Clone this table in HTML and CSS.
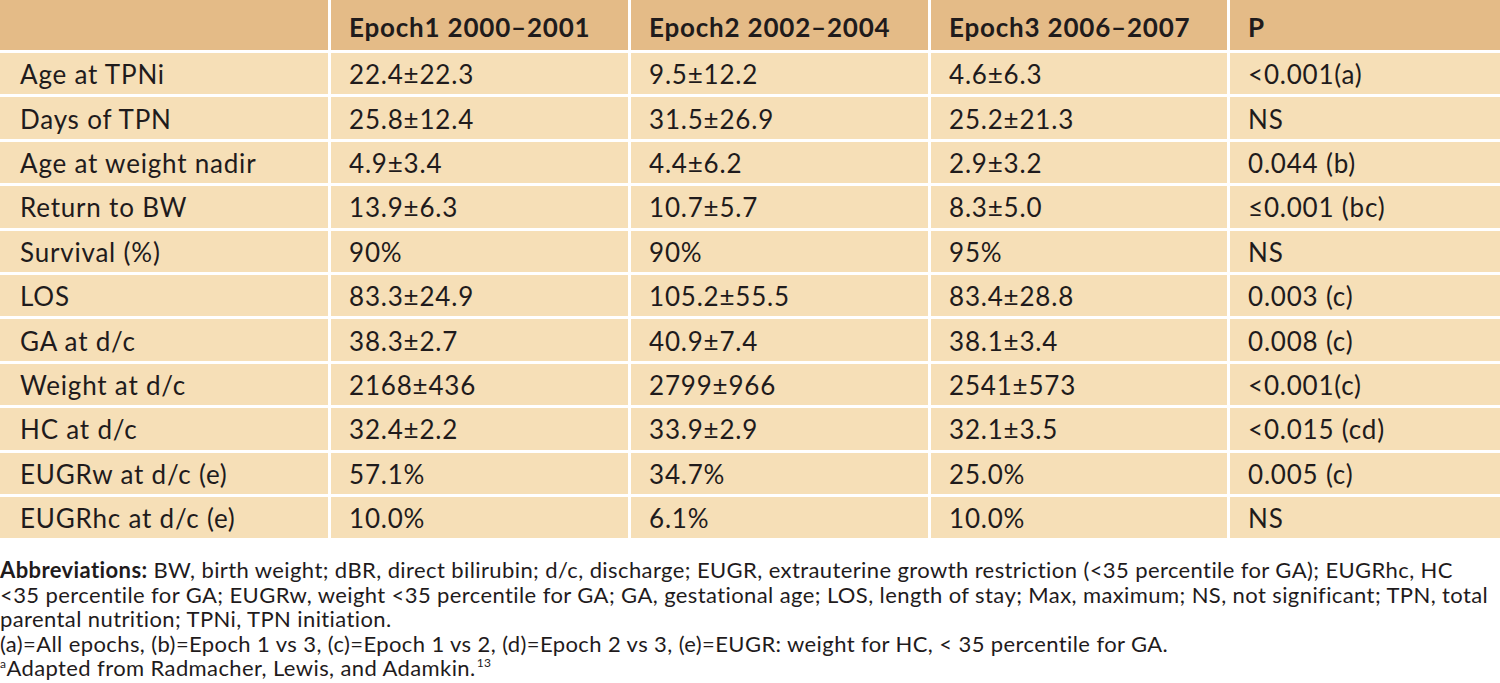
FILE: index.html
```html
<!DOCTYPE html>
<html>
<head>
<meta charset="utf-8">
<link rel="stylesheet" href="styles.css">
</head>
<body>
<div class="page">
<table class="data">
  <colgroup>
    <col class="c1"><col class="c2"><col class="c3"><col class="c4"><col class="c5">
  </colgroup>
  <thead>
    <tr><th></th><th>Epoch1 2000–2001</th><th>Epoch2 2002–2004</th><th>Epoch3 2006–2007</th><th>P</th></tr>
  </thead>
  <tbody>
    <tr><td>Age at TPNi</td><td>22.4±22.3</td><td>9.5±12.2</td><td>4.6±6.3</td><td>&lt;0.001(a)</td></tr>
    <tr><td>Days of TPN</td><td>25.8±12.4</td><td>31.5±26.9</td><td>25.2±21.3</td><td>NS</td></tr>
    <tr><td>Age at weight nadir</td><td>4.9±3.4</td><td>4.4±6.2</td><td>2.9±3.2</td><td>0.044 (b)</td></tr>
    <tr><td>Return to BW</td><td>13.9±6.3</td><td>10.7±5.7</td><td>8.3±5.0</td><td>≤0.001 (bc)</td></tr>
    <tr><td>Survival (%)</td><td>90%</td><td>90%</td><td>95%</td><td>NS</td></tr>
    <tr><td>LOS</td><td>83.3±24.9</td><td>105.2±55.5</td><td>83.4±28.8</td><td>0.003 (c)</td></tr>
    <tr><td>GA at d/c</td><td>38.3±2.7</td><td>40.9±7.4</td><td>38.1±3.4</td><td>0.008 (c)</td></tr>
    <tr><td>Weight at d/c</td><td>2168±436</td><td>2799±966</td><td>2541±573</td><td>&lt;0.001(c)</td></tr>
    <tr><td>HC at d/c</td><td>32.4±2.2</td><td>33.9±2.9</td><td>32.1±3.5</td><td>&lt;0.015 (cd)</td></tr>
    <tr><td>EUGRw at d/c (e)</td><td>57.1%</td><td>34.7%</td><td>25.0%</td><td>0.005 (c)</td></tr>
    <tr><td>EUGRhc at d/c (e)</td><td>10.0%</td><td>6.1%</td><td>10.0%</td><td>NS</td></tr>
  </tbody>
</table>
<div class="notes">
  <p class="line"><b>Abbreviations:</b> BW, birth weight; dBR, direct bilirubin; d/c, discharge; EUGR, extrauterine growth restriction (&lt;35 percentile for GA); EUGRhc, HC</p>
  <p class="line">&lt;35 percentile for GA; EUGRw, weight &lt;35 percentile for GA; GA, gestational age; LOS, length of stay; Max, maximum; NS, not significant; TPN, total</p>
  <p class="line">parental nutrition; TPNi, TPN initiation.</p>
  <p class="line">(a)=All epochs, (b)=Epoch 1 vs 3, (c)=Epoch 1 vs 2, (d)=Epoch 2 vs 3, (e)=EUGR: weight for HC, &lt; 35 percentile for GA.</p>
  <p class="line"><sup class="sa">a</sup>Adapted from Radmacher, Lewis, and Adamkin.<sup class="sn">13</sup></p>
</div>
</div>
</body>
</html>
```

FILE: styles.css
```css
html, body {
  margin: 0;
  padding: 0;
  background: #ffffff;
}
body {
  font-family: Lato, "Noto Sans", sans-serif;
  color: #1f1b1c;
  width: 1500px;
  height: 683px;
  overflow: hidden;
}
.page {
  display: flex;
  flex-direction: column;
}
.data {
  border-collapse: separate;
  border-spacing: 3px;
  margin: -3px -3px 0 -3px;
  width: 1506px;
  table-layout: fixed;
  font-size: 26px;
  letter-spacing: 0.8px;
}
.c1 { width: 328px; }
.c2 { width: 297px; }
.c3 { width: 297px; }
.c4 { width: 296px; }
.c5 { width: 270px; }
.data th {
  background: #e4bb87;
  height: 50px;
  padding: 3px 0 0 18px;
  text-align: left;
  font-weight: 700;
  box-sizing: border-box;
}
.data td {
  background: #f6dfb7;
  height: 41.4px;
  padding: 1px 0 0 18px;
  box-sizing: border-box;
  white-space: nowrap;
}
.data td:first-child {
  padding-left: 20px;
}
.notes {
  margin-top: 17px;
  font-size: 22px;
  line-height: 24.5px;
  letter-spacing: 0.4px;
}
.line {
  margin: 0;
  white-space: nowrap;
}
.notes b {
  font-weight: 700;
}
.sa {
  font-size: 12px;
  vertical-align: 8px;
  line-height: 0;
}
.sn {
  font-size: 12px;
  vertical-align: 9px;
  line-height: 0;
  margin-left: 1px;
}
```
